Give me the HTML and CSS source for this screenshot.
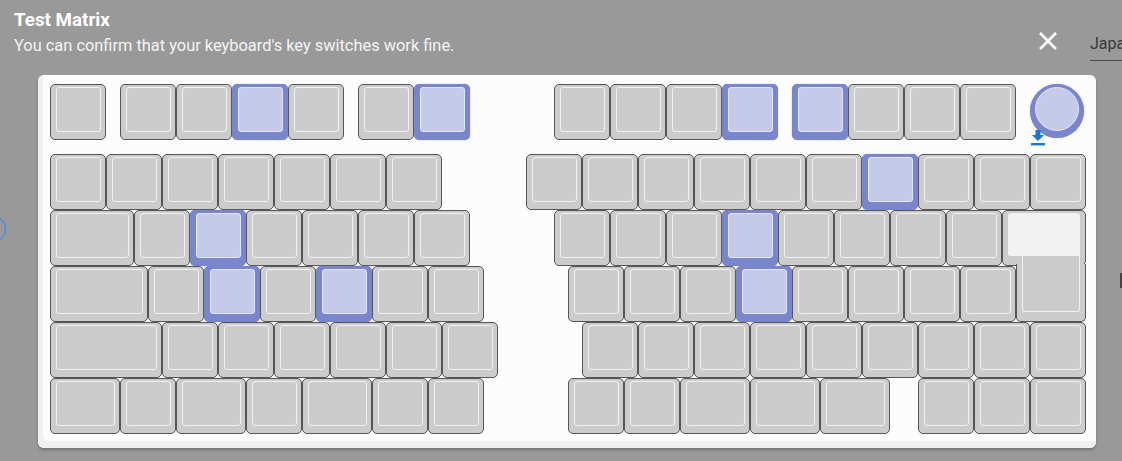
FILE: index.html
```html
<!DOCTYPE html>
<html>
<head>
<meta charset="utf-8">
<link rel="stylesheet" href="styles.css">
</head>
<body>
<div class="page">
  <header class="head">
    <div class="titles">
      <h1 class="title">Test Matrix</h1>
      <p class="sub">You can confirm that your keyboard's key switches work fine.</p>
    </div>
    <button class="close" aria-label="close">
      <svg width="20" height="20" viewBox="0 0 20 20"><path d="M2 2 L18 18 M18 2 L2 18" stroke="#fff" stroke-width="2.6" stroke-linecap="butt"/></svg>
    </button>
    <div class="lang">Japa</div>
  </header>
  <svg class="edge-circle" width="8" height="32" viewBox="0 0 8 32"><circle cx="-7" cy="16" r="12.5" fill="none" stroke="#4a86e8" stroke-width="1.3"/></svg>
  <div class="edge-mark"></div>
  <section class="panel">
    <div class="board" id="board"></div>
  </section>
</div>
<script src="app.js"></script>
</body>
</html>
```
FILE: styles.css
```css
* { box-sizing: border-box; }
html, body { margin: 0; padding: 0; }
body {
  background: #999999;
  font-family: Roboto, "Liberation Sans", sans-serif;
  width: 1122px;
  height: 461px;
  overflow: hidden;
}
.page { position: relative; height: 461px; }
.head {
  display: flex;
  align-items: flex-start;
  height: 75px;
  padding: 9px 0 0 14px;
}
.titles { flex: 1; }
.title {
  margin: 0;
  font-size: 18.8px;
  line-height: 23px;
  font-weight: 700;
  color: #fff;
}
.sub {
  margin: 4px 0 0;
  font-size: 16.4px;
  line-height: 20px;
  color: #f4f4f4;
}
.close {
  margin: 22px 0 0;
  padding: 0;
  border: 0;
  background: none;
  width: 20px;
  height: 20px;
  display: flex;
}
.lang {
  margin: 18px 0 0 32px;
  width: 32px;
  height: 34px;
  border-bottom: 1px solid #4a4a4a;
  color: #3a3a3a;
  font-size: 16px;
  line-height: 20px;
  padding-top: 7px;
  overflow: hidden;
  white-space: nowrap;
}
.edge-circle { position: absolute; left: 0; top: 213px; }
.edge-mark { position: absolute; left: 1120px; top: 273px; width: 2px; height: 15px; background: #444; }
.panel {
  margin-left: 38px;
  width: 1058px;
  height: 373px;
  background: #fcfcfc;
  border-radius: 6px;
  box-shadow: inset 5px -7px 0 #f0f0f0, 0 2px 3px rgba(0,0,0,0.25);
  padding: 9px 0 0 12px;
}
.board { position: relative; width: 1036px; height: 350px; }
.key {
  position: absolute;
  height: 56px;
  background: #cccccc;
  border: 1px solid #555555;
  border-radius: 5px;
  padding: 2px 4px 7px 5px;
}
.cap {
  width: 100%;
  height: 100%;
  border: 1px solid #f2f2f2;
  border-radius: 3px;
  background: #cccccc;
}
.key.on {
  background: #7986cb;
  border-color: #7986cb;
  box-shadow: 0 0 1px #7986cb;
}
.key.on .cap { background: #c5cae9; border-color: #e3e6f6; }
.enter-top { height: 56px; }
.enter-bot {
  position: absolute;
  background: #cccccc;
  border: 1px solid #555555;
  border-top: 0;
  border-radius: 0 0 5px 5px;
}
.enter-lo {
  position: absolute;
  border: 1px solid #f2f2f2;
  border-top: 0;
  border-radius: 0 0 3px 3px;
}
.enter-hi {
  position: absolute;
  background: #f2f2f2;
  border-radius: 3px 3px 0 3px;
}
.knob {
  position: absolute;
  width: 54px;
  height: 54px;
  border-radius: 50%;
  background: #7986cb;
  box-shadow: 0 0 1px #7986cb;
  padding: 3px 5px 7px 5px;
}
.knob-cap {
  width: 44px;
  height: 44px;
  border-radius: 50%;
  background: #c5cae9;
  border: 1px solid #e3e6f6;
}
.knob-icon { position: absolute; }
```
FILE: app.js
```js
(function () {
  var U = 56;
  var board = document.getElementById('board');
  // [x, y, w, pressed]
  var keys = [];
  function row(y, list) { list.forEach(function (k) { keys.push([k[0], y, k[1] || 1, !!k[2]]); }); }
  row(0, [[0], [1.25], [2.25], [3.25, 1, 1], [4.25], [5.5], [6.5, 1, 1],
          [9], [10], [11], [12, 1, 1], [13.25, 1, 1], [14.25], [15.25], [16.25]]);
  var r1 = []; for (var i = 0; i < 7; i++) r1.push([i]);
  for (i = 0; i < 10; i++) r1.push([8.5 + i, 1, (8.5 + i) === 14.5]);
  row(1.25, r1);
  var r2 = [[0, 1.5], [1.5], [2.5, 1, 1], [3.5], [4.5], [5.5], [6.5]];
  for (i = 0; i < 8; i++) r2.push([9 + i, 1, (9 + i) === 12]);
  row(2.25, r2);
  var r3 = [[0, 1.75], [1.75], [2.75, 1, 1], [3.75], [4.75, 1, 1], [5.75], [6.75]];
  for (i = 0; i < 8; i++) r3.push([9.25 + i, 1, (9.25 + i) === 12.25]);
  row(3.25, r3);
  var r4 = [[0, 2]]; for (i = 0; i < 6; i++) r4.push([2 + i]);
  for (i = 0; i < 9; i++) r4.push([9.5 + i]);
  row(4.25, r4);
  row(5.25, [[0, 1.25], [1.25], [2.25, 1.25], [3.5], [4.5, 1.25], [5.75], [6.75],
             [9.25], [10.25], [11.25, 1.25], [12.5, 1.25], [13.75, 1.25], [15.5], [16.5], [17.5]]);

  function px(v) { return Math.round(v * U) + 'px'; }
  keys.forEach(function (k) {
    var d = document.createElement('div');
    d.className = 'key' + (k[3] ? ' on' : '');
    d.style.left = px(k[0]);
    d.style.top = px(k[1]);
    d.style.width = px(k[2]);
    var c = document.createElement('div');
    c.className = 'cap';
    d.appendChild(c);
    board.appendChild(d);
  });

  // ISO enter at x=17u, y=2.25u
  var ex = 17 * U, ey = Math.round(2.25 * U);
  var top = document.createElement('div');
  top.className = 'key enter-top';
  top.style.left = ex + 'px'; top.style.top = ey + 'px'; top.style.width = Math.round(1.5 * U) + 'px';
  board.appendChild(top);
  var bot = document.createElement('div');
  bot.className = 'enter-bot';
  bot.style.left = (ex + 14) + 'px'; bot.style.top = (ey + 54) + 'px';
  bot.style.width = '70px'; bot.style.height = '58px';
  board.appendChild(bot);
  var lo = document.createElement('div');
  lo.className = 'enter-lo';
  lo.style.left = (ex + 20) + 'px'; lo.style.top = (ey + 46) + 'px';
  lo.style.width = '58px'; lo.style.height = '56px';
  board.appendChild(lo);
  var hi = document.createElement('div');
  hi.className = 'enter-hi';
  hi.style.left = (ex + 6) + 'px'; hi.style.top = (ey + 3) + 'px';
  hi.style.width = '72px'; hi.style.height = '43px';
  board.appendChild(hi);

  // encoder knob
  var kn = document.createElement('div');
  kn.className = 'knob';
  kn.style.left = px(17.5); kn.style.top = '0px';
  kn.innerHTML = '<div class="knob-cap"></div>';
  board.appendChild(kn);
  var ic = document.createElement('div');
  ic.className = 'knob-icon';
  ic.style.left = (17.5 * U + 1) + 'px'; ic.style.top = '44px';
  ic.innerHTML = '<svg width="14" height="18" viewBox="0 0 14 18"><path d="M4.5 2 H9.5 V7 H13 L7 13 L1 7 H4.5 Z" fill="#1976d2"/><rect x="0" y="15" width="14" height="2.4" fill="#1976d2"/></svg>';
  board.appendChild(ic);
})();
```
